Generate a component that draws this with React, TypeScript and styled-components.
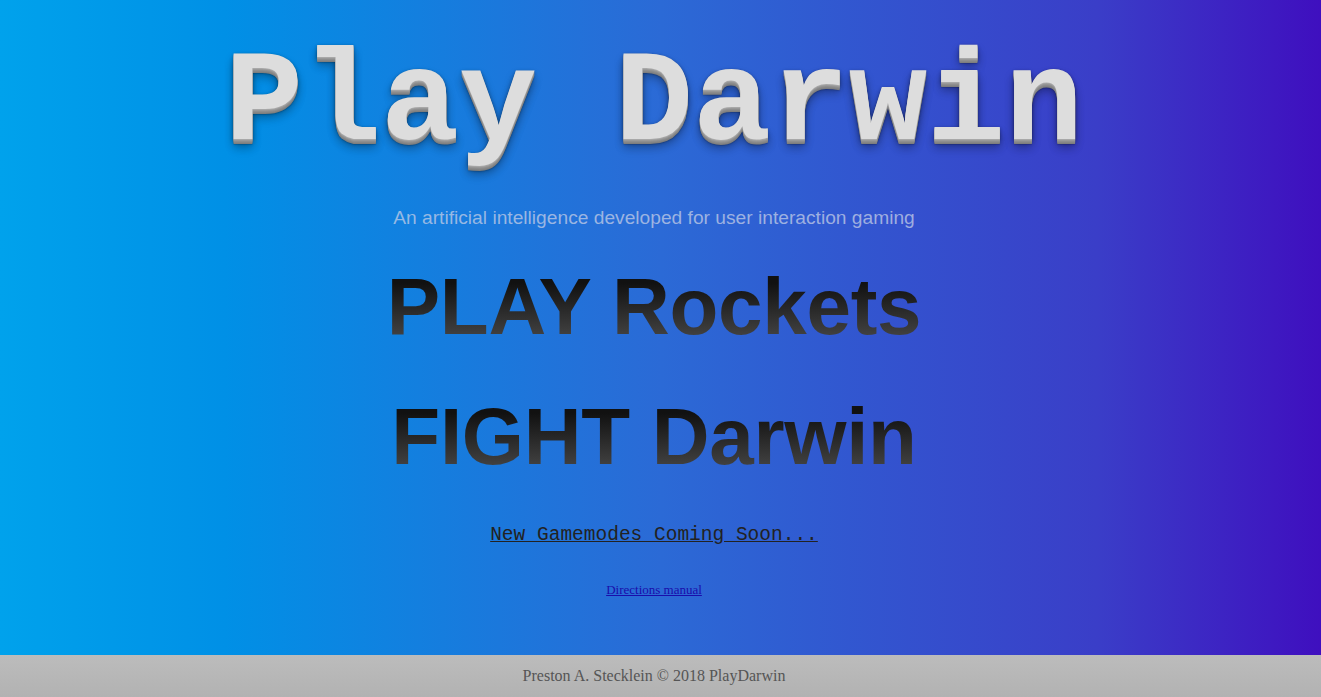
import React from "react";
import styled, { createGlobalStyle } from "styled-components";

const Global = createGlobalStyle`
  html, body { margin: 0; padding: 0; }
  body {
    font-family: "Liberation Serif", "Times New Roman", serif;
  }
`;

const Page = styled.div`
  min-height: 100vh;
  display: flex;
  flex-direction: column;
  background: linear-gradient(to right, #00a2ec 0%, #0090e6 17%, #2b6ad6 50%, #3a3ec8 83%, #3f0fbf 100%);
`;

const Main = styled.main`
  flex: 1;
  display: flex;
  flex-direction: column;
  align-items: center;
  text-align: center;
  padding-right: 13px;
`;

const Title = styled.h1`
  margin: 40px 0 0;
  font-family: "Courier New", Courier, "Nimbus Mono PS", "Nimbus Mono L", FreeMono, "Liberation Mono", monospace;
  font-weight: 700;
  font-size: 130px;
  line-height: 1;
  color: #dddddd;
  text-shadow:
    0 1px 0 #a8a8a8,
    0 2px 0 #999999,
    0 3px 0 #8e8e8e,
    0 4px 0 #868686,
    0 5px 0 #7e7e7e,
    0 6px 1px rgba(0, 0, 0, 0.15),
    0 1px 3px rgba(0, 0, 0, 0.3),
    0 3px 5px rgba(0, 0, 0, 0.2),
    0 6px 10px rgba(0, 0, 0, 0.25),
    0 10px 10px rgba(0, 0, 0, 0.15);
`;

const Subtitle = styled.p`
  margin: 37px 0 0;
  font-family: "Liberation Sans", Arial, sans-serif;
  font-size: 19.2px;
  color: rgba(195, 205, 230, 0.75);
`;

const GameLink = styled.a<{ $gap: number }>`
  display: block;
  font-family: "Liberation Sans", Arial, sans-serif;
  font-weight: 700;
  font-size: 80px;
  line-height: 1;
  letter-spacing: -0.3px;
  text-decoration: none;
  background: linear-gradient(to bottom, #111111 20%, #444444 90%);
  -webkit-background-clip: text;
  background-clip: text;
  color: transparent;
  margin-top: ${(p) => p.$gap}px;
`;

const Soon = styled.a`
  margin-top: 47px;
  font-family: "Liberation Mono", "Courier New", monospace;
  font-size: 19.5px;
  color: #222222;
  text-decoration: underline;
`;

const Manual = styled.a`
  margin-top: 36px;
  font-family: "Liberation Serif", "Times New Roman", serif;
  font-size: 13px;
  color: #1a0dab;
  text-decoration: underline;
`;

const Footer = styled.footer`
  height: 42px;
  display: flex;
  align-items: center;
  justify-content: center;
  padding-right: 13px;
  background: linear-gradient(to bottom, #bcbcbc, #b2b2b2);
  font-family: "Liberation Serif", "Times New Roman", serif;
  font-size: 16px;
  color: #555555;
`;

export default function App() {
  return (
    <>
      <Global />
      <Page>
        <Main>
          <Title>Play Darwin</Title>
          <Subtitle>An artificial intelligence developed for user interaction gaming</Subtitle>
          <GameLink href="#" $gap={38}>PLAY Rockets</GameLink>
          <GameLink href="#" $gap={50}>FIGHT Darwin</GameLink>
          <Soon href="#">New Gamemodes Coming Soon...</Soon>
          <Manual href="#">Directions manual</Manual>
        </Main>
        <Footer>Preston A. Stecklein © 2018 PlayDarwin</Footer>
      </Page>
    </>
  );
}
